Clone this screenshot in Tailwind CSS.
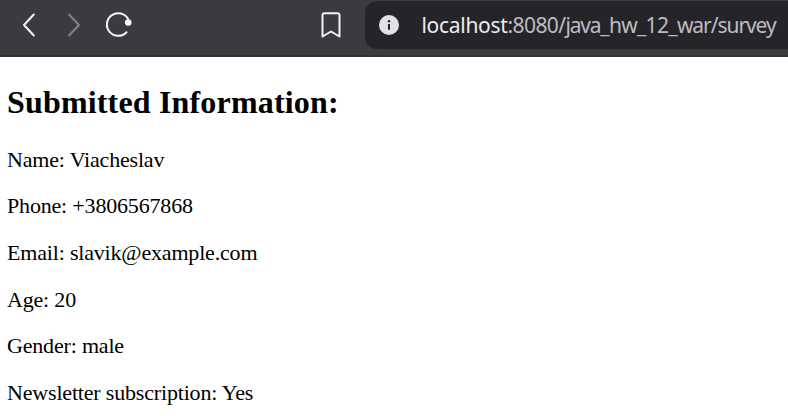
<!DOCTYPE html>
<html lang="en">
<head>
<meta charset="utf-8">
<title>Survey</title>
<script src="https://cdn.jsdelivr.net/npm/@tailwindcss/browser@4"></script>
</head>
<body class="h-[416px] w-[788px] overflow-hidden bg-white">
<header class="flex h-[57px] items-start border-b-2 border-[#323236] bg-[#3b3b3f]">
  <svg class="h-[55px] w-[365px] shrink-0" viewBox="0 0 365 55" fill="none" stroke-linecap="round" stroke-linejoin="round">
    <path d="M33.8 14.5 24 25l9.8 10.5" stroke="#f4f4f6" stroke-width="2"/>
    <path d="M69 14.5 79 25 69 35.500" stroke="#828286" stroke-width="2"/>
    <path d="M128.200 19.200A11.300 11.300 0 1 0 126.500 32.200" stroke="#f4f4f6" stroke-width="2"/>
    <circle cx="128.200" cy="22.500" r="3.300" fill="#f4f4f6"/>
    <path d="M324.500 13.200h13a2 2 0 0 1 2 2v21.300l-8.500-5-8.500 5V15.200a2 2 0 0 1 2-2Z" stroke="#f4f4f6" stroke-width="2"/>
  </svg>
  <div class="mt-px flex h-12 flex-1 items-center rounded-l-xl bg-[#252529] pl-3.5">
    <svg class="h-5 w-5 shrink-0" viewBox="0 0 20 20">
      <circle cx="10" cy="10" r="10" fill="#e2e2e6"/>
      <circle cx="10" cy="6.200" r="1.200" fill="#252529"/>
      <path d="M10 9v5.700" stroke="#252529" stroke-width="2"/>
    </svg>
    <div class="ml-[22.500px] whitespace-nowrap font-['Noto_Sans','Open_Sans',sans-serif] text-[21px] leading-7 text-[#bdbdc1]"><span class="tracking-[-0.3px] text-[#ececf0]">localhost</span><span class="tracking-[-0.6px]">:8080/</span><span class="tracking-[-1.2px]">java</span><span class="tracking-[-0.7px]">_hw_12_</span><span class="tracking-[-1.05px]">war/survey</span></div>
  </div>
</header>
<main class="px-[7px] pt-[26px] font-['Liberation_Serif','Times_New_Roman',serif] text-black">
  <h1 class="text-[32px] font-bold leading-[38px] tracking-[0.17px]">Submitted Information:</h1>
  <div class="mt-[25.700px] flex flex-col gap-[20.660px] text-[22px] leading-[26px] tracking-[-0.18px]">
    <p>Name: Viacheslav</p>
    <p>Phone: +3806567868</p>
    <p>Email: slavik@example.com</p>
    <p>Age: 20</p>
    <p>Gender: male</p>
    <p>Newsletter subscription: Yes</p>
  </div>
</main>
</body>
</html>
